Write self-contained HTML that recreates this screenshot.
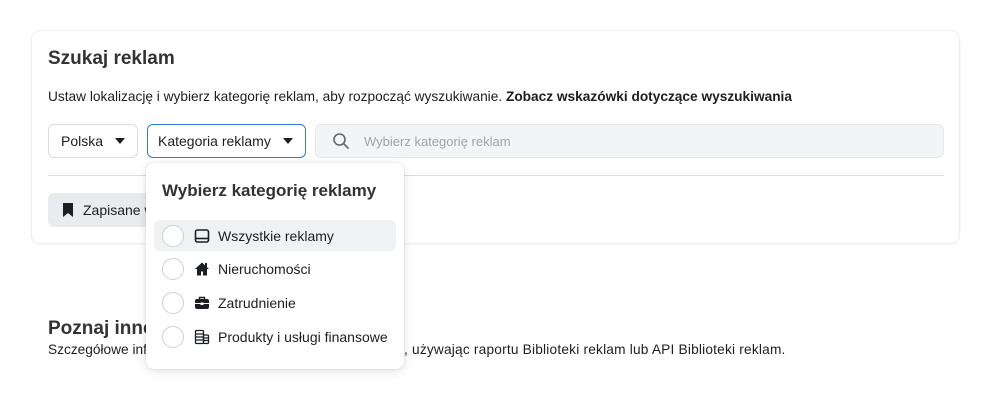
<!DOCTYPE html>
<html><head><meta charset="utf-8"><style>
body{margin:0;width:993px;height:400px;background:#fff;font-family:"Liberation Sans",Arial,sans-serif;color:#1c1e21;position:relative;overflow:hidden}
.abs{position:absolute}
.card{left:32px;top:31px;width:927px;height:212px;border-radius:8px;box-shadow:0 0 0 1px #eceef1,0 1px 3px rgba(0,0,0,.06)}
.btn{border:1px solid #dadde1;border-radius:6px;height:34px;box-sizing:border-box;font-size:14px;display:flex;align-items:center}
.caret{display:inline-block;width:0;height:0;border-left:5.5px solid transparent;border-right:5.5px solid transparent;border-top:6px solid #1c1e21;margin-left:12px}
.pop{left:146px;top:163px;width:258px;height:206px;background:#fff;border-radius:8px;box-shadow:0 2px 10px rgba(0,0,0,.13),0 0 0 1px rgba(0,0,0,.03)}
.row{position:absolute;left:8px;width:242px;height:31px;border-radius:6px;display:flex;align-items:center;font-size:14px;color:#1c1e21}
.radio{width:22px;height:22px;border:1px solid #ccd0d5;border-radius:50%;box-sizing:border-box;margin-left:8px;margin-right:10px;background:#fff}
.ic{width:16px;height:16px;margin-right:8px;display:flex}
</style></head><body>
<div class="abs card"></div>
<div class="abs" style="left:48px;top:48px;font-size:19px;font-weight:bold;color:#333">Szukaj reklam</div>
<div class="abs" style="left:48px;top:89px;font-size:13.7px;color:#1c1e21">Ustaw lokalizację i wybierz kategorię reklam, aby rozpocząć wyszukiwanie. <b>Zobacz wskazówki dotyczące wyszukiwania</b></div>
<div class="abs btn" style="left:48px;top:124px;width:90px;padding-left:12px">Polska<span class="caret"></span></div>
<div class="abs btn" style="left:147px;top:124px;width:159px;padding-left:10px;border:1.5px solid #3578e5">Kategoria reklamy<span class="caret"></span></div>
<div class="abs btn" style="left:315px;top:124px;width:629px;background:#f3f4f6;border-color:#e6e8eb;padding-left:16px;color:#a0a4a9;font-size:13px">
<svg width="18" height="18" viewBox="0 0 18 18" style="margin-right:14px"><circle cx="7.5" cy="7.5" r="5.5" fill="none" stroke="#65676b" stroke-width="1.6"/><path d="M11.5 11.5L16 16" stroke="#65676b" stroke-width="1.6" stroke-linecap="round"/></svg>Wybierz kategorię reklam</div>
<div class="abs" style="left:48px;top:175px;width:896px;height:1px;background:#dadde1"></div>
<div class="abs" style="left:48px;top:193px;width:110px;height:34px;background:#e9ebee;border-radius:6px;font-size:14px;display:flex;align-items:center">
<svg width="12" height="16" viewBox="0 0 12 16" style="margin:0 9px 0 14px"><path d="M1 1h10v14l-5-4-5 4z" fill="#1c1e21"/></svg>Zapisane w</div>
<div class="abs" style="left:48px;top:318px;font-size:19px;font-weight:bold;color:#333">Poznaj inne sposoby</div>
<div class="abs" style="left:48px;top:342px;font-size:13.7px">Szczegółowe informacje o reklamach</div>
<div class="abs" style="left:404px;top:342px;font-size:13.7px;letter-spacing:0.2px">, używając raportu Biblioteki reklam lub API Biblioteki reklam.</div>
<div class="abs pop">
<div class="abs" style="left:16px;top:18px;font-size:17px;font-weight:bold;color:#333">Wybierz kategorię reklamy</div>
<div class="row" style="top:57px;background:#f0f1f3"><span class="radio"></span><span class="ic"><svg width="16" height="16" viewBox="0 0 16 16"><rect x="1.5" y="2" width="13" height="12" rx="2" fill="none" stroke="#1c1e21" stroke-width="1.6"/><path d="M2 10.5h12" stroke="#1c1e21" stroke-width="1.6"/></svg></span>Wszystkie reklamy</div>
<div class="row" style="top:90px"><span class="radio"></span><span class="ic"><svg width="16" height="16" viewBox="0 0 16 16"><path d="M8 1.5L1 8h2v6.5h4v-4h2v4h4V8h2z" fill="#1c1e21"/><rect x="11" y="2" width="2" height="4" fill="#1c1e21"/></svg></span>Nieruchomości</div>
<div class="row" style="top:124px"><span class="radio"></span><span class="ic"><svg width="16" height="16" viewBox="0 0 16 16"><path d="M5.5 4V2.5h5V4" fill="none" stroke="#1c1e21" stroke-width="1.4"/><rect x="1" y="4" width="14" height="10" rx="2" fill="#1c1e21"/><path d="M1 8.5h14" stroke="#fff" stroke-width="1"/><rect x="6.5" y="7.5" width="3" height="2.5" fill="#fff"/></svg></span>Zatrudnienie</div>
<div class="row" style="top:158px"><span class="radio"></span><span class="ic"><svg width="16" height="16" viewBox="0 0 16 16" fill="none" stroke="#1c1e21" stroke-width="1.3"><rect x="1.5" y="1.5" width="8" height="13" rx="1"/><path d="M1.5 5h8M1.5 8h8M1.5 11h8"/><rect x="9.5" y="6" width="5" height="8.5" rx="1"/><path d="M9.5 9h5M9.5 11.5h5"/></svg></span>Produkty i usługi finansowe</div>
</div>
</body></html>
